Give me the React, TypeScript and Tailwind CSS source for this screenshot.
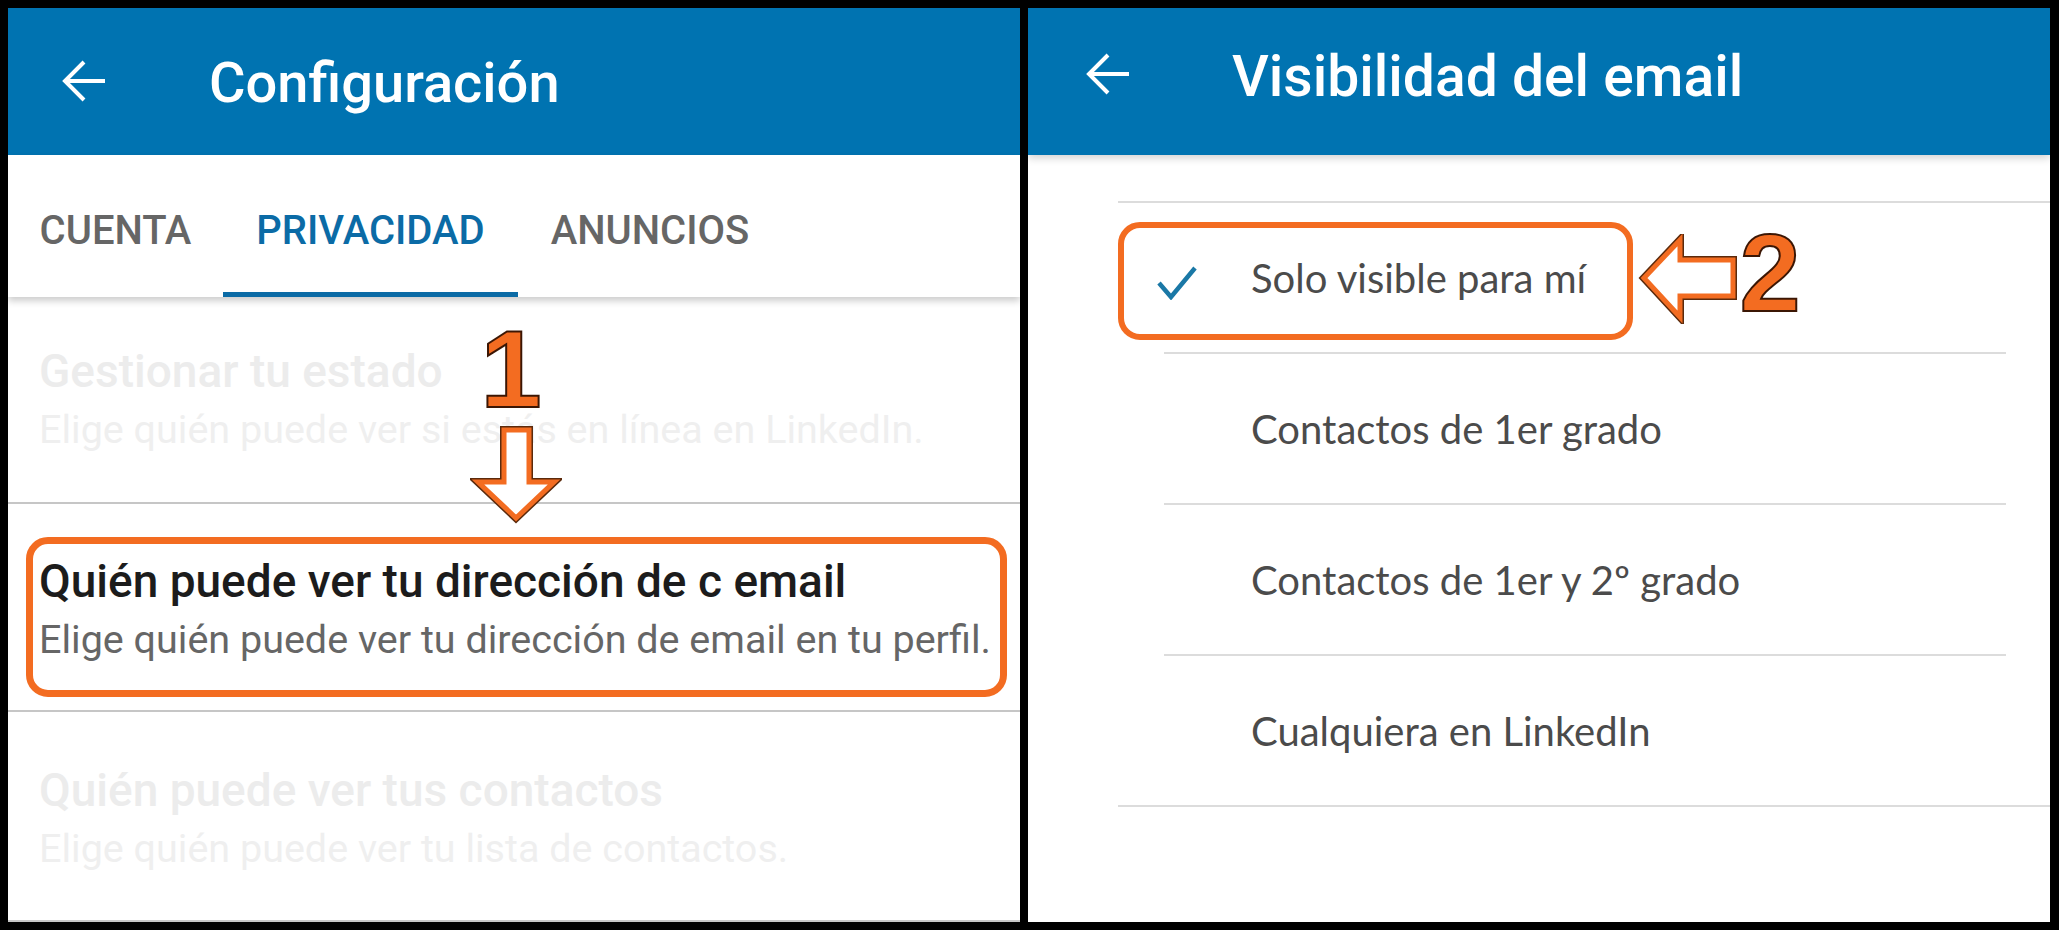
import React from "react";

const BackArrow = () => (
  <svg width="46" height="44" viewBox="0 0 46 44" fill="none">
    <path d="M44 22H4M23 3L4 22l19 19" stroke="white" strokeWidth="4" />
  </svg>
);

const CheckIcon = () => (
  <svg width="40" height="34" viewBox="0 0 40 34" fill="none">
    <path d="M2 17l12 14L38 2" stroke="#1a78a6" strokeWidth="4.5" />
  </svg>
);

function OutlinedArrow({ points, w, h }: { points: string; w: number; h: number }) {
  return (
    <svg width={w} height={h} viewBox={`0 0 ${w} ${h}`}>
      <polygon points={points} fill="white" stroke="#5b2a0c" strokeWidth="8" strokeLinejoin="miter" />
      <polygon points={points} fill="white" stroke="#f36c21" strokeWidth="5" strokeLinejoin="miter" />
    </svg>
  );
}

function BigNumber({ n }: { n: string }) {
  return (
    <span className="block w-[62px] text-center font-['Liberation_Sans',Arial,sans-serif] text-[110px] font-bold leading-none text-[#f36c21] [-webkit-text-stroke:2px_#3b1604]">
      {n}
    </span>
  );
}

type Row = { title: string; sub: string; faded: boolean; pt: string; h: string };

const rows: Row[] = [
  {
    title: "Gestionar tu estado",
    sub: "Elige quién puede ver si estás en línea en LinkedIn.",
    faded: true,
    pt: "pt-[47px]",
    h: "h-[205px]",
  },
  {
    title: "Quién puede ver tu dirección de c email",
    sub: "Elige quién puede ver tu dirección de email en tu perfil.",
    faded: false,
    pt: "pt-[50px]",
    h: "h-[206px]",
  },
  {
    title: "Quién puede ver tus contactos",
    sub: "Elige quién puede ver tu lista de contactos.",
    faded: true,
    pt: "pt-[51px]",
    h: "h-[208px]",
  },
];

const options = [
  "Solo visible para mí",
  "Contactos de 1er grado",
  "Contactos de 1er y 2º grado",
  "Cualquiera en LinkedIn",
];

function SettingsPanel() {
  return (
    <div className="relative flex h-[914px] w-[1012px] flex-col bg-white font-['Roboto',sans-serif]">
      <header className="flex h-[147px] items-start bg-[#0073b1]">
        <div className="ml-[53px] mt-[51px]">
          <BackArrow />
        </div>
        <h1 className="ml-[102px] mt-[42px] text-[56px] font-medium leading-[1.2] text-white">Configuración</h1>
      </header>

      <nav className="relative z-10 flex h-[142px] bg-white shadow-[0_4px_7px_rgba(0,0,0,0.2)]">
        <div className="flex w-[215px] flex-col items-center justify-between pt-[52px]">
          <span className="text-[40px] font-medium leading-[1.2] text-[#666666]">CUENTA</span>
          <span className="h-[5px] w-full" />
        </div>
        <div className="flex w-[295px] flex-col items-center justify-between pt-[52px]">
          <span className="text-[40px] font-medium leading-[1.2] text-[#0b6ba6]">PRIVACIDAD</span>
          <span className="h-[5px] w-full bg-[#0b6ba6]" />
        </div>
        <div className="flex w-[264px] flex-col items-center justify-between pt-[52px]">
          <span className="text-[40px] font-medium leading-[1.2] text-[#666666]">ANUNCIOS</span>
          <span className="h-[5px] w-full" />
        </div>
      </nav>

      {rows.map((r) => (
        <div key={r.title} className="border-b-2 border-[#c6c6c6]">
          <div className={`flex flex-col gap-[7px] pl-[31px] ${r.pt} ${r.h}`}>
            <span
              className={`text-[46px] font-medium leading-[1.2] ${r.faded ? "text-[#ececec]" : "text-[#1c1c1c]"}`}
            >
              {r.title}
            </span>
            <span className={`text-[39.5px] leading-[1.2] ${r.faded ? "text-[#efefef]" : "text-[#666666]"}`}>
              {r.sub}
            </span>
          </div>
        </div>
      ))}

      {/* annotation 1 */}
      <div className="absolute left-[18px] top-[529px] h-[160px] w-[981px] rounded-[22px] border-[7px] border-[#f36c21]" />
      <div className="absolute left-[472px] top-[306px]">
        <BigNumber n="1" />
      </div>
      <div className="absolute left-[462px] top-[416px]">
        <OutlinedArrow w={92} h={102} points="34,6 59,6 59,58 84,58 46,94 8,58 34,58" />
      </div>
    </div>
  );
}

function EmailPanel() {
  return (
    <div className="relative flex h-[914px] w-[1022px] flex-col bg-white">
      <header className="relative z-10 flex h-[147px] items-start bg-[#0073b1] shadow-[0_3px_8px_rgba(0,0,0,0.18)]">
        <div className="ml-[57px] mt-[44px]">
          <BackArrow />
        </div>
        <h1 className="ml-[101px] mt-[35px] font-['Roboto',sans-serif] text-[57px] font-medium leading-[1.2] text-white">
          Visibilidad del email
        </h1>
      </header>

      <div className="mt-[46px] ml-[90px] h-[2px] bg-[#dcdcdc]" />
      {options.map((o, i) => (
        <div key={o}>
          <div className="relative flex h-[149px] items-center">
            {i === 0 && (
              <div className="absolute left-[129px] top-[63px]">
                <CheckIcon />
              </div>
            )}
            <span className="ml-[223px] font-['Lato',sans-serif] text-[40px] leading-[1.2] text-[#4b4b4b]">{o}</span>
          </div>
          <div className={`h-[2px] bg-[#dcdcdc] ${i === 3 ? "ml-[90px]" : "ml-[136px] w-[842px]"}`} />
        </div>
      ))}

      {/* annotation 2 */}
      <div className="absolute left-[90px] top-[214px] h-[118px] w-[515px] rounded-[22px] border-[6px] border-[#f36c21]" />
      <div className="absolute left-[610px] top-[226px]">
        <OutlinedArrow w={102} h={90} points="95,26 42,26 42,6 6,44 42,83 42,62 95,62" />
      </div>
      <div className="absolute left-[711px] top-[210px]">
        <BigNumber n="2" />
      </div>
    </div>
  );
}

export default function App() {
  return (
    <div className="flex h-[930px] w-[2059px] gap-[8px] bg-black p-[8px]">
      <SettingsPanel />
      <EmailPanel />
    </div>
  );
}
